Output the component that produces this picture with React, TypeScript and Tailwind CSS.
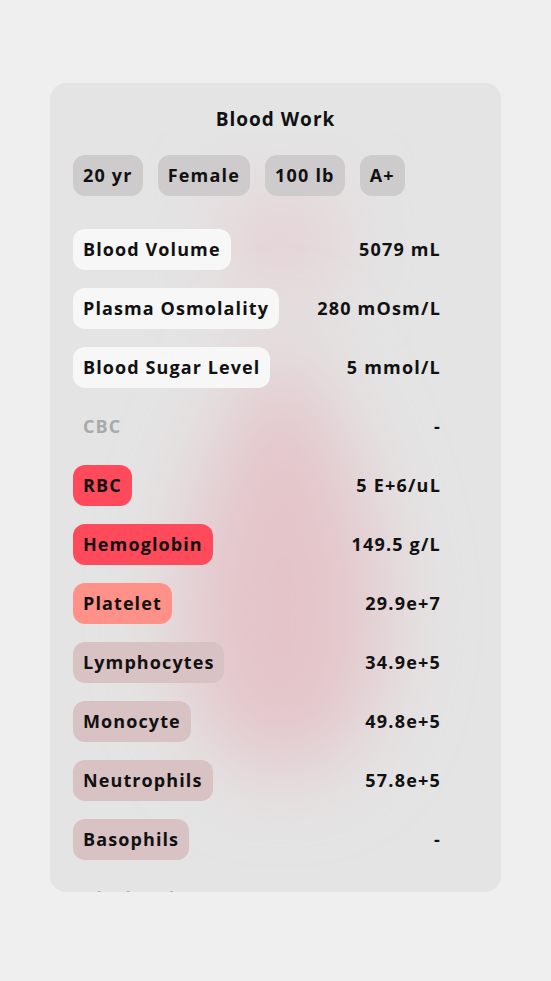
import React from 'react';

type Row = { label: string; value: string; tone: 'white' | 'red' | 'salmon' | 'rose' | 'head' };

const rows: Row[] = [
  { label: 'Blood Volume', value: '5079 mL', tone: 'white' },
  { label: 'Plasma Osmolality', value: '280 mOsm/L', tone: 'white' },
  { label: 'Blood Sugar Level', value: '5 mmol/L', tone: 'white' },
  { label: 'CBC', value: '-', tone: 'head' },
  { label: 'RBC', value: '5 E+6/uL', tone: 'red' },
  { label: 'Hemoglobin', value: '149.5 g/L', tone: 'red' },
  { label: 'Platelet', value: '29.9e+7', tone: 'salmon' },
  { label: 'Lymphocytes', value: '34.9e+5', tone: 'rose' },
  { label: 'Monocyte', value: '49.8e+5', tone: 'rose' },
  { label: 'Neutrophils', value: '57.8e+5', tone: 'rose' },
  { label: 'Basophils', value: '-', tone: 'rose' },
  { label: 'Biochemistry', value: '', tone: 'head' },
];

const toneClass: Record<Row['tone'], string> = {
  white: 'bg-[#f7f7f7] text-[#111]',
  red: 'bg-[#ff4a5c] text-[#111]',
  salmon: 'bg-[#ff9189] text-[#111]',
  rose: 'bg-[#d8c2c3] text-[#111]',
  head: 'text-[#a9a9a9]',
};

const tags = ['20 yr', 'Female', '100 lb', 'A+'];

export default function App() {
  return (
    <div className="min-h-[981px] bg-[#efefef] px-[50px] pt-[83px]" style={{ fontFamily: '"Open Sans", Lato, sans-serif' }}>
      <div className="relative h-[809px] overflow-hidden rounded-2xl bg-[#e4e4e4]">
        {/* blurred drop behind the list */}
        <svg className="pointer-events-none absolute left-0 top-0" width="451" height="809" viewBox="0 0 451 809">
          <defs>
            <filter id="b" x="-60%" y="-60%" width="220%" height="220%">
              <feGaussianBlur stdDeviation="42" />
            </filter>
          </defs>
          <ellipse cx="232" cy="158" rx="60" ry="50" fill="#e6cdd1" filter="url(#b)" />
          <path d="M232 240 C 195 320 130 420 130 530 C 130 640 180 690 232 690 C 284 690 334 640 334 530 C 334 420 269 320 232 240 Z" fill="#e4c4c9" filter="url(#b)" />
        </svg>

        <div className="relative flex flex-col px-[23px] pt-[22px]">
          <h1 className="text-center text-[19px] font-bold tracking-[1px] text-[#111]">Blood Work</h1>
          <div className="mt-[21px] flex gap-[15px]">
            {tags.map((t) => (
              <span key={t} className="flex h-[41px] items-center rounded-xl bg-[#cdcbcb] px-[10px] text-[18px] font-bold tracking-[1.2px] text-[#111]">
                {t}
              </span>
            ))}
          </div>
          <div className="mt-[33px] mr-[37px] flex flex-col gap-[18px]">
            {rows.map((r) => (
              <div key={r.label} className="flex h-[41px] items-center justify-between">
                <span className={`flex h-[41px] items-center rounded-xl px-[10px] text-[18px] font-bold tracking-[1.1px] ${toneClass[r.tone]}`}>
                  {r.label}
                </span>
                <span className="text-[18px] font-bold tracking-[1.2px] text-[#111]">{r.value}</span>
              </div>
            ))}
          </div>
        </div>
      </div>
    </div>
  );
}
